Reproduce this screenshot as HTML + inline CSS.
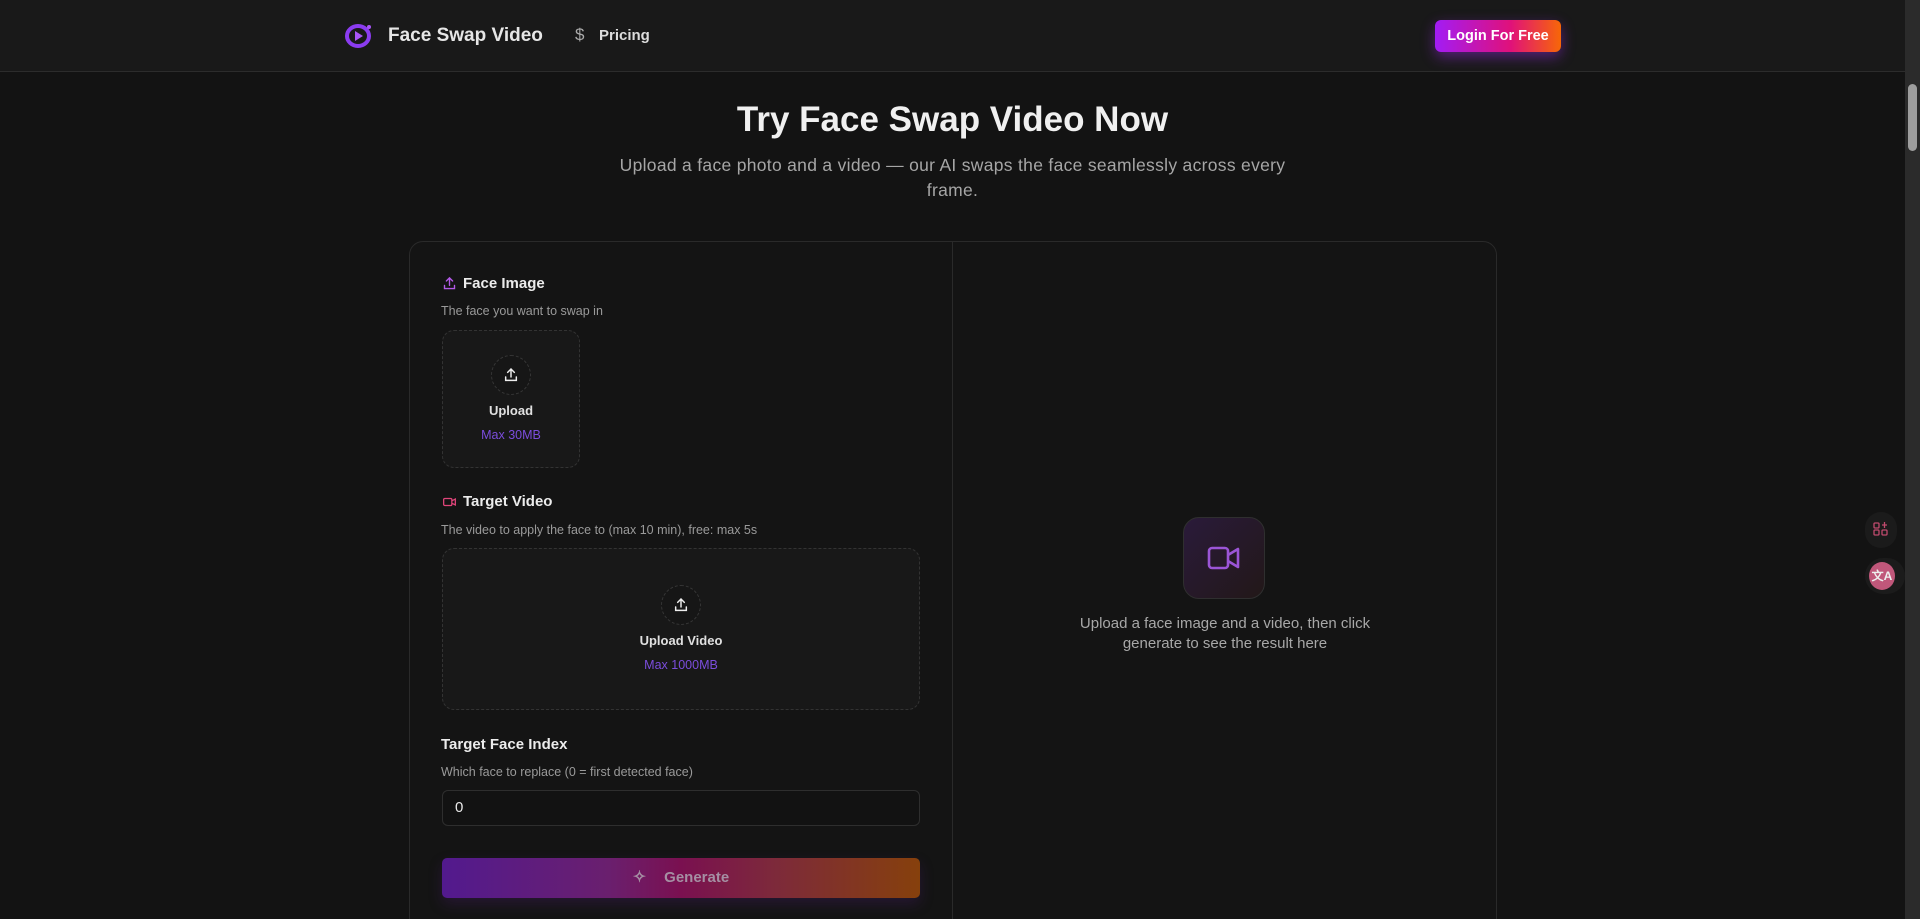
<!DOCTYPE html>
<html style="height:919px;overflow:hidden"><head><meta charset="utf-8"><style>
*{box-sizing:border-box;margin:0;padding:0}
body{width:1920px;height:919px;overflow:hidden;background:#131313;font-family:"Liberation Sans",sans-serif;color:#e8e8e8;position:relative}
.hdr{position:absolute;left:0;top:0;width:1905px;height:72px;background:#191919;border-bottom:1px solid #2c2c2c}
.abs{position:absolute}
.sb{position:absolute;right:0;top:0;width:15px;height:919px;background:#2b2b2b}
.thumb{position:absolute;left:3px;top:84px;width:9px;height:67px;background:#9e9e9e;border-radius:5px}
.card{position:absolute;left:409px;top:241px;width:1088px;height:700px;border:1px solid #2a2a2a;border-radius:14px;background:#141414}
.div{position:absolute;left:952px;top:242px;width:1px;height:677px;background:#2a2a2a}
.lbl{font-size:15px;font-weight:bold;color:#ececec}
.desc{font-size:12.5px;color:#9a9a9a}
.dash{border:1px dashed #333;border-radius:12px;background:#181818}
.circ{width:40px;height:40px;border-radius:50%;border:1px dashed #363636;background:#161616;display:flex;align-items:center;justify-content:center}
.up{font-size:13px;font-weight:bold;color:#e0e0e0;text-align:center}
.mx{font-size:12.5px;color:#7b4ddc;text-align:center}
</style></head><body>
<div class="hdr">
 <svg class="abs" style="left:344px;top:23px" width="30" height="26" viewBox="0 0 30 26"><ellipse cx="14" cy="13" rx="11" ry="10" fill="none" stroke="#8b3cf0" stroke-width="4"/><path d="M11 8 L19 13 L11 18Z" fill="#a855f7"/><circle cx="25" cy="4" r="2" fill="#a855f7"/></svg>
 <div class="abs" style="left:388px;top:25px;font-size:19px;font-weight:bold;color:#e6e6e6">Face Swap Video</div>
 <div class="abs" style="left:575px;top:25px;font-size:17px;color:#aaa">$</div>
 <div class="abs" style="left:599px;top:27px;font-size:15px;font-weight:bold;color:#ddd">Pricing</div>
 <div class="abs" style="left:1435px;top:20px;width:126px;height:32px;border-radius:6px;background:linear-gradient(90deg,#a21cf5,#e0117a 60%,#f76707);box-shadow:0 5px 14px rgba(160,40,240,.45);color:#fff;font-size:14.5px;font-weight:bold;text-align:center;line-height:32px">Login For Free</div>
</div>
<div class="abs" style="left:0;width:1905px;top:100px;text-align:center;font-size:35px;font-weight:bold;color:#f0f0f0">Try Face Swap Video Now</div>
<div class="abs" style="left:610px;width:685px;top:153px;text-align:center;font-size:17.5px;letter-spacing:0.3px;line-height:25px;color:#a6a6a6">Upload a face photo and a video — our AI swaps the face seamlessly across every frame.</div>
<div class="card"></div><div class="div"></div>
<svg class="abs" style="left:442px;top:276px" width="15" height="15" viewBox="0 0 24 24" fill="none" stroke="#b35ae8" stroke-width="2.2" stroke-linecap="round"><path d="M12 15V3M7 8l5-5 5 5M4 15v5h16v-5"/></svg>
<div class="abs lbl" style="left:463px;top:275px">Face Image</div>
<div class="abs desc" style="left:441px;top:304px">The face you want to swap in</div>
<div class="abs dash" style="left:442px;top:330px;width:138px;height:138px"></div>
<div class="abs circ" style="left:491px;top:355px"><svg width="16" height="16" viewBox="0 0 24 24" fill="none" stroke="#eee" stroke-width="2.2" stroke-linecap="round"><path d="M12 15V3M7 8l5-5 5 5M4 15v5h16v-5"/></svg></div>
<div class="abs up" style="left:442px;width:138px;top:403px">Upload</div>
<div class="abs mx" style="left:442px;width:138px;top:428px">Max 30MB</div>
<svg class="abs" style="left:442px;top:495px" width="15" height="14" viewBox="0 0 24 24" fill="none" stroke="#e0457a" stroke-width="2.2"><rect x="2" y="6" width="14" height="12" rx="2"/><path d="M16 10l6-3v10l-6-3"/></svg>
<div class="abs lbl" style="left:463px;top:493px">Target Video</div>
<div class="abs desc" style="left:441px;top:523px">The video to apply the face to (max 10 min), free: max 5s</div>
<div class="abs dash" style="left:442px;top:548px;width:478px;height:162px"></div>
<div class="abs circ" style="left:661px;top:585px"><svg width="16" height="16" viewBox="0 0 24 24" fill="none" stroke="#eee" stroke-width="2.2" stroke-linecap="round"><path d="M12 15V3M7 8l5-5 5 5M4 15v5h16v-5"/></svg></div>
<div class="abs up" style="left:442px;width:478px;top:633px">Upload Video</div>
<div class="abs mx" style="left:442px;width:478px;top:658px">Max 1000MB</div>
<div class="abs lbl" style="left:441px;top:736px">Target Face Index</div>
<div class="abs desc" style="left:441px;top:765px">Which face to replace (0 = first detected face)</div>
<div class="abs" style="left:442px;top:790px;width:478px;height:36px;border:1px solid #2e2e2e;border-radius:6px;background:#121212;font-size:15px;color:#e8e8e8;padding-left:12px;line-height:34px">0</div>
<div class="abs" style="left:442px;top:858px;width:478px;height:40px;border-radius:5px;background:linear-gradient(90deg,#521a8e,#6a1f6e 35%,#7a1050 50%,#7d2a3a 70%,#86400c);box-shadow:0 6px 14px rgba(80,30,120,.3);text-align:center;line-height:40px;font-size:15px;font-weight:bold;color:#a58fa3"><span style="font-size:16px;margin-right:18px">✧</span>Generate</div>
<div class="abs" style="left:1183px;top:517px;width:82px;height:82px;border-radius:16px;border:1px solid #2f2f2f;background:linear-gradient(135deg,#2a1a3a,#221818)"></div>
<svg class="abs" style="left:1207px;top:546px" width="34" height="24" viewBox="0 0 34 24" fill="none" stroke="#9b55d6" stroke-width="2.6" stroke-linejoin="round"><rect x="2" y="2" width="19" height="20" rx="3"/><path d="M21 9l10-6v18l-10-6"/></svg>
<div class="abs" style="left:1064px;width:322px;top:614px;text-align:center;font-size:15px;line-height:20px;color:#a8a8a8">Upload a face image and a video, then click generate to see the result here</div>
<div class="abs" style="left:1865px;top:512px;width:32px;height:36px;border-radius:16px;background:#1b1b1b"></div>
<svg class="abs" style="left:1873px;top:521px" width="16" height="16" viewBox="0 0 16 16" fill="none" stroke="#c04a6e" stroke-width="1.3"><rect x="1" y="2" width="5" height="5" rx="1"/><rect x="1" y="9" width="5" height="5" rx="1"/><rect x="9" y="9" width="5" height="5" rx="1"/><path d="M11.5 1v6M9 4h5"/></svg>
<div class="abs" style="left:1865px;top:558px;width:40px;height:36px;border-radius:18px;background:#1b1b1b"></div>
<div class="abs" style="left:1869px;top:562px;width:26px;height:28px;border-radius:50%;background:#c0577a;color:#eee;font-size:12px;font-weight:bold;text-align:center;line-height:28px">文A</div>
<div class="sb"><div class="thumb"></div></div>
</body></html>
